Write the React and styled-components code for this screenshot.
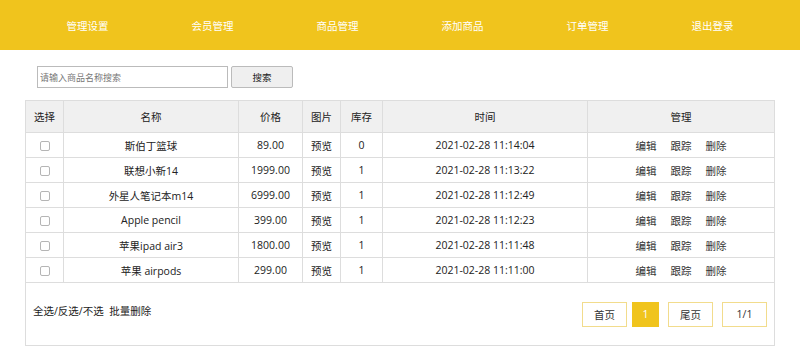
import React from 'react';
import styled, { createGlobalStyle } from 'styled-components';

const GlobalStyle = createGlobalStyle`
    body {
        margin: 0;
        font-family: 'Open Sans', 'Noto Sans CJK SC', sans-serif;
        font-size: 10.5px;
        color: #222;
        background: #fff;
    }
`

const Header = styled.div`
    background: #F0C41D;
    height: 50px;
    display: flex;
    padding: 0 25px;
`

const NavItem = styled.a`
    width: 125px;
    display: flex;
    align-items: center;
    justify-content: center;
    color: #fff;
    font-size: 10.5px;
`

const Main = styled.div`
    padding: 16px 25px 0;
`

const SearchBar = styled.div`
    display: flex;
    gap: 3px;
    padding-left: 12px;
    margin-bottom: 12px;
`

const SearchInput = styled.input`
    width: 191px;
    height: 22px;
    box-sizing: border-box;
    border: 1px solid #bbb;
    padding: 0 2px;
    font-family: 'Noto Sans CJK SC', sans-serif;
    font-size: 9px;
    outline: none;
    &::placeholder { color: #777; }
`

const SearchButton = styled.button`
    width: 62px;
    height: 22px;
    background: #efefef;
    border: 1px solid #bbb;
    border-radius: 2px;
    font-family: 'Noto Sans CJK SC', sans-serif;
    font-size: 9.5px;
    color: #222;
`

const Table = styled.table`
    width: 750px;
    border-collapse: collapse;
    table-layout: fixed;
`

const Th = styled.th`
    background: #f0f0f0;
    height: 31px;
    padding: 0;
    font-weight: normal;
    border: 1px solid #ddd;
    width: ${p => p.w}px;
`

const Td = styled.td`
    height: 24px;
    border: 1px solid #ddd;
    text-align: center;
    padding: 0;
`

const Check = styled.span`
    display: inline-block;
    width: 8px;
    height: 8px;
    border: 1px solid #b5b5b5;
    border-radius: 2px;
    vertical-align: middle;
`

const Action = styled.a`
    margin: 0 7px;
    color: #333;
`

const Footer = styled.div`
    height: 63px;
    box-sizing: border-box;
    border: 1px solid #ddd;
    border-top: none;
    display: flex;
    align-items: center;
    justify-content: space-between;
    padding: 0 7px;
`

const BatchText = styled.div`
    margin-top: -7px;
`

const Pager = styled.div`
    display: flex;
    gap: 9px;
`

const PageBox = styled.span`
    width: ${p => p.w}px;
    height: 25px;
    box-sizing: border-box;
    display: flex;
    align-items: center;
    justify-content: center;
    border: 1px solid ${p => p.active ? '#F0C41D' : '#f2dc8c'};
    background: ${p => p.active ? '#F0C41D' : '#fff'};
    color: ${p => p.active ? '#fff' : '#333'};
    margin-left: ${p => p.ml || 0}px;
`

const nav = ['管理设置', '会员管理', '商品管理', '添加商品', '订单管理', '退出登录'];

const rows = [
    ['斯伯丁篮球', '89.00', '0', '2021-02-28 11:14:04'],
    ['联想小新14', '1999.00', '1', '2021-02-28 11:13:22'],
    ['外星人笔记本m14', '6999.00', '1', '2021-02-28 11:12:49'],
    ['Apple pencil', '399.00', '1', '2021-02-28 11:12:23'],
    ['苹果ipad air3', '1800.00', '1', '2021-02-28 11:11:48'],
    ['苹果 airpods', '299.00', '1', '2021-02-28 11:11:00'],
];

const App = () => (
    <>
        <GlobalStyle />
        <Header>
            {nav.map(n => <NavItem key={n}>{n}</NavItem>)}
        </Header>
        <Main>
            <SearchBar>
                <SearchInput placeholder="请输入商品名称搜索" />
                <SearchButton>搜索</SearchButton>
            </SearchBar>
            <Table>
                <thead>
                    <tr>
                        <Th w={37}>选择</Th>
                        <Th w={174}>名称</Th>
                        <Th w={63}>价格</Th>
                        <Th w={37}>图片</Th>
                        <Th w={41}>库存</Th>
                        <Th w={204}>时间</Th>
                        <Th w={186}>管理</Th>
                    </tr>
                </thead>
                <tbody>
                    {rows.map(r => (
                        <tr key={r[0]}>
                            <Td><Check /></Td>
                            <Td>{r[0]}</Td>
                            <Td>{r[1]}</Td>
                            <Td>预览</Td>
                            <Td>{r[2]}</Td>
                            <Td>{r[3]}</Td>
                            <Td>
                                <Action>编辑</Action>
                                <Action>跟踪</Action>
                                <Action>删除</Action>
                            </Td>
                        </tr>
                    ))}
                </tbody>
            </Table>
            <Footer>
                <BatchText>全选/反选/不选&nbsp;&nbsp;批量删除</BatchText>
                <Pager>
                    <PageBox w={45}>首页</PageBox>
                    <PageBox w={27} active ml={-4}>1</PageBox>
                    <PageBox w={45}>尾页</PageBox>
                    <PageBox w={45}>1/1</PageBox>
                </Pager>
            </Footer>
        </Main>
    </>
);

export default App;
